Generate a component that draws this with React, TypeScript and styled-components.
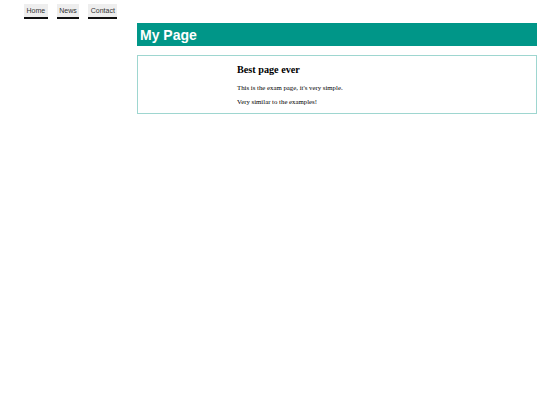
import styled, { createGlobalStyle } from "styled-components";

const GlobalStyle = createGlobalStyle`
  body {
    margin: 0;
    background: #ffffff;
    font-family: "Liberation Sans", Arial, sans-serif;
  }
`;

const Page = styled.div`
  display: flex;
  flex-direction: column;
  padding-top: 4px;
`;

const Nav = styled.nav`
  display: flex;
  gap: 9px;
  padding-left: 24px;
`;

const NavItem = styled.a`
  display: block;
  background: #eeeeee;
  color: #333333;
  font-size: 7px;
  line-height: 13px;
  padding: 0 2.5px;
  border-bottom: 2px solid #111111;
  text-decoration: none;
`;

const Main = styled.main`
  display: flex;
  flex-direction: column;
  gap: 9px;
  margin: 4px 0 0 137px;
  width: 400px;
`;

const Header = styled.header`
  background: #009688;
  color: #ffffff;
  height: 23px;
  display: flex;
  align-items: center;
  padding-left: 3px;
`;

const Title = styled.h1`
  margin: 0;
  font-size: 14px;
  font-weight: bold;
`;

const Card = styled.section`
  border: 1px solid #9ed6d0;
  padding: 7px 0 1px 99px;
  font-family: "Liberation Serif", "Times New Roman", serif;
  color: #000000;
`;

const Heading = styled.h2`
  margin: 0 0 8px;
  font-size: 10.2px;
  line-height: 13px;
`;

const Text = styled.p`
  margin: 0 0 6px;
  font-size: 6.8px;
  line-height: 8px;
`;

export default function App() {
  return (
    <Page>
      <GlobalStyle />
      <Nav>
        <NavItem>Home</NavItem>
        <NavItem>News</NavItem>
        <NavItem>Contact</NavItem>
      </Nav>
      <Main>
        <Header>
          <Title>My Page</Title>
        </Header>
        <Card>
          <Heading>Best page ever</Heading>
          <Text>This is the exam page, it's very simple.</Text>
          <Text>Very similar to the examples!</Text>
        </Card>
      </Main>
    </Page>
  );
}
